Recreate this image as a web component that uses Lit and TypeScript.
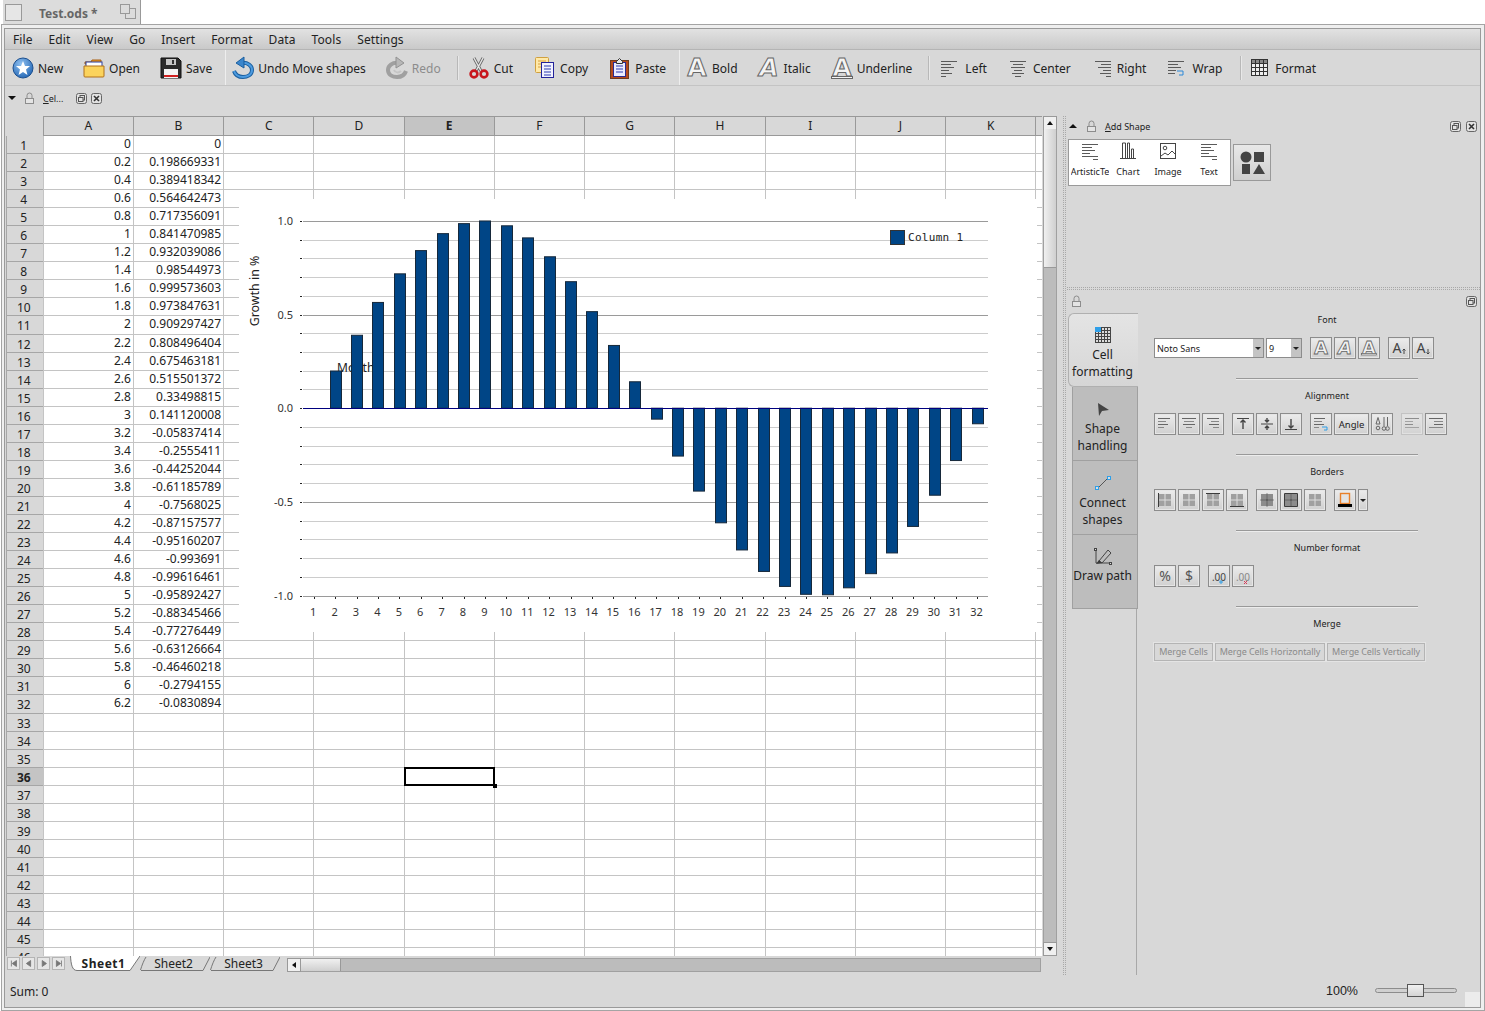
import { LitElement, html, css, svg } from "lit";
import { customElement } from "lit/decorators.js";

const B_VALUES = [
  "0", "0.198669331", "0.389418342", "0.564642473", "0.717356091", "0.841470985", "0.932039086", "0.98544973",
  "0.999573603", "0.973847631", "0.909297427", "0.808496404", "0.675463181", "0.515501372", "0.33498815",
  "0.141120008", "-0.05837414", "-0.2555411", "-0.44252044", "-0.61185789", "-0.7568025", "-0.87157577",
  "-0.95160207", "-0.993691", "-0.99616461", "-0.95892427", "-0.88345466", "-0.77276449", "-0.63126664",
  "-0.46460218", "-0.2794155", "-0.0830894",
];
const COLUMNS = ["A", "B", "C", "D", "E", "F", "G", "H", "I", "J", "K", ""];

const icon22 = (body: unknown) => html`<svg class="i22" viewBox="0 0 22 22" width="22" height="22">${body}</svg>`;
const icon18 = (body: unknown) => html`<svg class="i18" viewBox="0 0 18 18" width="18" height="18">${body}</svg>`;

const letterA = (style = "normal", extra: unknown = null) => svg`
  <text x="11" y="19" text-anchor="middle" font-family="DejaVu Sans" font-size="25" font-weight="bold" font-style=${style}
    fill="#f4f4f4" stroke="#666" stroke-width="1">A</text>${extra}`;

const lines = (rows: [number, number][]) =>
  rows.map(([x, w], i) => svg`<rect x=${x} y=${2 + i * 3} width=${w} height="1" fill="#5a5a5a"></rect>`);

const ICONS: Record<string, () => unknown> = {
  new: () => icon22(svg`
    <defs><radialGradient id="ng" cx="40%" cy="30%" r="80%"><stop offset="0" stop-color="#8fc0f0"></stop><stop offset="1" stop-color="#1a5fb0"></stop></radialGradient></defs>
    <circle cx="11" cy="11" r="10" fill="url(#ng)" stroke="#1b4f8f"></circle>
    <polygon points="11,4 13,9 18,9 14,12.5 15.5,18 11,15 6.5,18 8,12.5 4,9 9,9" fill="#fff"></polygon>`),
  open: () => icon22(svg`
    <path d="M2 5h6l1-2h9v4H2z" fill="#f09a20" stroke="#a85e10"></path>
    <rect x="3" y="5" width="16" height="5" fill="#fff" stroke="#2b3fa0"></rect>
    <path d="M1 9h20v10a1 1 0 0 1-1 1H2a1 1 0 0 1-1-1z" fill="#fbd35c" stroke="#b0701a"></path>`),
  save: () => icon22(svg`
    <path d="M1 1h17l3 3v17H1z" fill="#2c2c2c" stroke="#111"></path>
    <rect x="6" y="2" width="10" height="6" fill="#c8c8c8"></rect>
    <rect x="12" y="3" width="2" height="4" fill="#333"></rect>
    <rect x="4" y="12" width="14" height="9" fill="#f4f4f4"></rect>
    <rect x="4" y="18" width="14" height="2" fill="#d02020"></rect>`),
  undo: () => icon22(svg`
    <path d="M9 6C16 5 20 9 20 13C20 18 15 20 11 20C6 20 3 17 2 14" fill="none" stroke="#1b5f9f" stroke-width="4"></path>
    <path d="M9 6C16 5 20 9 20 13C20 18 15 20 11 20C6 20 3 17 2 14" fill="none" stroke="#4c9be0" stroke-width="2"></path>
    <polygon points="12,0 4,6 12,11" fill="#3b86cc" stroke="#1b5f9f"></polygon>`),
  redo: () => icon22(svg`
    <path d="M13 6C6 5 2 9 2 13C2 18 7 20 11 20C16 20 19 17 20 14" fill="none" stroke="#9a9a9a" stroke-width="4"></path>
    <path d="M8 13c1 3 5 3 7 1" fill="none" stroke="#c4c4c4" stroke-width="2"></path>
    <polygon points="10,0 18,6 10,11" fill="#b4b4b4" stroke="#8a8a8a"></polygon>`),
  cut: () => icon22(svg`
    <path d="M6 1l7 13M15 1L8 14" stroke="#666" stroke-width="3" fill="none"></path>
    <path d="M6 1l7 13M15 1L8 14" stroke="#e4e4e4" stroke-width="1.4" fill="none"></path>
    <circle cx="6" cy="17" r="3.4" fill="none" stroke="#c8161d" stroke-width="2.6"></circle>
    <circle cx="16" cy="17" r="3.4" fill="none" stroke="#c8161d" stroke-width="2.6"></circle>`),
  copy: () => icon22(svg`
    <rect x="1.5" y="0.5" width="13" height="15" rx="1" fill="#ffe9a8" stroke="#d0a040"></rect>
    <path d="M4 4h8M4 7h8M4 10h5" stroke="#d8a040"></path>
    <rect x="7.5" y="5.5" width="12" height="15" fill="#f2f2ff" stroke="#22229a"></rect>
    <path d="M10 9h7M10 12h7M10 15h7M10 18h7" stroke="#2a3ab0"></path>`),
  paste: () => icon22(svg`
    <rect x="1.5" y="3.5" width="18" height="18" fill="#b5491c" stroke="#6e3a20"></rect>
    <rect x="4.5" y="5.5" width="12" height="14" fill="#ececff" stroke="#2a2a90"></rect>
    <path d="M7.5 4.5l3-3 3 3v2h-6z" fill="#e8e8e8" stroke="#333"></path>
    <path d="M7 9h7M7 12h7M7 15h7" stroke="#2a3ab0"></path>`),
  bold: () => icon22(letterA()),
  italic: () => icon22(letterA("italic")),
  underline: () => icon22(letterA("normal", svg`<rect x="0.5" y="19.5" width="21" height="2" fill="#f4f4f4" stroke="#666"></rect>`)),
  left: () => icon18(lines([[0, 16], [0, 10], [0, 13], [0, 8], [0, 11], [0, 5]])),
  center: () => icon18(lines([[1, 16], [4, 10], [2, 14], [5, 8], [3, 12], [6, 6]])),
  right: () => icon18(lines([[2, 16], [8, 10], [5, 13], [10, 8], [7, 11], [13, 5]])),
  wrap: () => icon18(svg`${lines([[0, 16], [0, 10], [0, 13], [0, 8], [0, 7]])}
    <path d="M9 12h6v4h-4" fill="none" stroke="#2a88d8"></path>`),
  format: () => icon18(svg`
    <rect x="0.5" y="0.5" width="16" height="16" fill="#eee" stroke="#333"></rect>
    <rect x="0.5" y="0.5" width="16" height="4" fill="#888" stroke="#333"></rect>
    <path d="M4.5 1v15M8.5 1v15M12.5 1v15M1 8.5h15M1 12.5h15" stroke="#333"></path>`),
};

const lock = html`<svg class="lock" viewBox="0 0 11 13" width="11" height="13">
  <path d="M3 6V3.5a2.5 2.5 0 0 1 5 0V6" fill="none" stroke="#8c8c8c"></path>
  <rect x="1.5" y="6.5" width="8" height="5" fill="#e4e4e4" stroke="#8c8c8c"></rect>
</svg>`;
const floatIcon = html`<svg viewBox="0 0 11 11" width="11" height="11">
  <rect x="0.5" y="0.5" width="10" height="10" rx="2" fill="#e2e2e2" stroke="#666"></rect>
  <rect x="4" y="2.5" width="4.5" height="4.5" fill="none" stroke="#555"></rect>
  <rect x="2.5" y="4.5" width="4.5" height="4" fill="#e2e2e2" stroke="#555"></rect>
</svg>`;
const closeIcon = html`<svg viewBox="0 0 11 11" width="11" height="11">
  <rect x="0.5" y="0.5" width="10" height="10" rx="2" fill="#e2e2e2" stroke="#666"></rect>
  <path d="M3 3l5 5M8 3l-5 5" stroke="#333" stroke-width="1.6"></path>
</svg>`;

// small 16px glyphs for the cell formatting buttons
const mini = (body: unknown) => html`<svg class="mini" viewBox="0 0 16 16" width="16" height="16">${body}</svg>`;
const hLines = (rows: [number, number][]) =>
  rows.map(([x, w], i) => svg`<rect x=${x} y=${2 + i * 3} width=${w} height="1" fill=${i % 2 ? "#888" : "#666"}></rect>`);
const vAlign = (lineY: number, body: string) => mini(svg`
  <rect x="2" y=${lineY} width="12" height="1" fill="#444"></rect>
  <path d=${body} fill="none" stroke="#444" stroke-width="1.4"></path>`);
const aText = (label: string, size: number, fill = "#444") =>
  svg`<text x="8" y="12.5" text-anchor="middle" font-family="Noto Sans" font-size=${size} fill=${fill}>${label}</text>`;
const borderCells = (edges = "", dark = false) => {
  const c = dark ? "#8c8c8c" : "#a0a0a0";
  return mini(svg`
    <rect x="2" y="2" width="5.5" height="5.5" fill=${c}></rect>
    <rect x="8.5" y="2" width="5.5" height="5.5" fill=${c}></rect>
    <rect x="2" y="8.5" width="5.5" height="5.5" fill=${c}></rect>
    <rect x="8.5" y="8.5" width="5.5" height="5.5" fill=${c}></rect>
    <path d=${edges} stroke="#3c3c3c" fill="none"></path>`);
};
const smallA = (style = "normal", extra: unknown = null) => mini(svg`
  <text x="8" y="13.5" text-anchor="middle" font-family="DejaVu Sans" font-size="18" font-weight="bold" font-style=${style}
    fill="#f2f2f2" stroke="#666" stroke-width="0.8">A</text>${extra}`);

const TABS = [
  {
    label: ["Cell", "formatting"],
    icon: html`<svg viewBox="0 0 16 16" width="16" height="16">
      <rect x="0.5" y="0.5" width="15" height="15" fill="#ddd" stroke="#444"></rect>
      <path d="M3.5 1v14M6.5 1v14M9.5 1v14M12.5 1v14M1 3.5h14M1 6.5h14M1 9.5h14M1 12.5h14" stroke="#444"></path>
      <rect x="0" y="0" width="6" height="5" fill="#2f9fe8"></rect></svg>`,
  },
  {
    label: ["Shape", "handling"],
    icon: html`<svg viewBox="0 0 16 16" width="16" height="16">
      <polygon points="3,2 14,9 7,10 4,15" fill="#444"></polygon></svg>`,
  },
  {
    label: ["Connect", "shapes"],
    icon: html`<svg viewBox="0 0 16 16" width="16" height="16">
      <path d="M3 13L13 3" stroke="#555"></path>
      <rect x="0.5" y="11.5" width="3" height="3" fill="#ddd" stroke="#2f9fe8"></rect>
      <rect x="12.5" y="1.5" width="3" height="3" fill="#ddd" stroke="#2f9fe8"></rect></svg>`,
  },
  {
    label: ["Draw path"],
    icon: html`<svg viewBox="0 0 18 18" width="18" height="18">
      <path d="M5 13L14 2l3 3-9 10z" fill="none" stroke="#444"></path>
      <path d="M2 16l3-4 3 3z" fill="#333"></path>
      <rect x="0.5" y="0.5" width="2" height="2" fill="#ddd" stroke="#444"></rect>
      <rect x="15.5" y="14.5" width="2" height="2" fill="#ddd" stroke="#444"></rect>
      <path d="M2 3v12h13" fill="none" stroke="#444"></path></svg>`,
  },
];

@customElement("sheet-chart")
export class SheetChart extends LitElement {
  static styles = css`
    :host {
      position: absolute;
      left: 234px;
      top: 83px;
      width: 798px;
      height: 433px;
      z-index: 2;
      background: #fff;
    }
    svg {
      display: block;
    }
    text {
      font-family: "Noto Sans", sans-serif;
      fill: #333;
    }
    .axis {
      font-size: 11px;
    }
    .title {
      font-size: 12px;
      fill: #222;
    }
    .growth {
      font-size: 12.4px;
      fill: #222;
    }
    .legend {
      font-family: "DejaVu Sans Mono", monospace;
      font-size: 11px;
      fill: #222;
      letter-spacing: 0.3px;
    }
  `;

  render() {
    const yOf = (v: number) => 408.2 - v * 187.3;
    const xOf = (i: number) => 303 + (i + 0.5) * 21.4;
    const grid = Array.from({ length: 21 }, (_, i) => (10 - i) / 10);
    return html`<svg viewBox="239 199 798 433" width="798" height="433">
      ${grid.map((v) => {
        const major = Math.abs(v * 2 - Math.round(v * 2)) < 0.001;
        const y = Math.round(yOf(v)) + 0.5;
        return svg`
          <line x1="303" x2="988" y1=${y} y2=${y} stroke=${major ? "#9a9a9a" : "#cccccc"}></line>
          <line x1="300" x2="302" y1=${y} y2=${y} stroke="#222"></line>`;
      })}
      ${[1, 0.5, 0, -0.5, -1].map(
        (v) => svg`<text class="axis" x="293" y=${yOf(v) + 4} text-anchor="end">${v.toFixed(1)}</text>`
      )}
      <text class="title" x="337" y="372">Month</text>
      <text class="growth" transform="translate(259 291) rotate(-90)" text-anchor="middle">Growth in %</text>
      ${B_VALUES.map((raw, i) => {
        const v = Number(raw);
        const x = Math.round(xOf(i) - 5.5) + 0.5;
        const y0 = yOf(Math.max(v, 0));
        const h = Math.abs(v) * 187.3;
        return v === 0
          ? null
          : svg`<rect x=${x} y=${y0} width="11" height=${h} fill="#004586" stroke="#16283a"></rect>`;
      })}
      <line x1="303" x2="988" y1="408.5" y2="408.5" stroke="#00007f"></line>
      ${B_VALUES.map((_, i) => {
        const x = Math.round(xOf(i)) + 0.5;
        return svg`
          <line x1=${x} x2=${x} y1="597" y2="599" stroke="#222"></line>
          <text class="axis" x=${xOf(i) - 0.5} y="616" text-anchor="middle">${i + 1}</text>`;
      })}
      <rect x="890.5" y="230.5" width="14" height="14" fill="#004586" stroke="#333"></rect>
      <text class="legend" x="908" y="241">Column 1</text>
    </svg>`;
  }
}

@customElement("app-root")
export class AppRoot extends LitElement {
  static styles = css`
    :host {
      display: block;
      position: relative;
      width: 1485px;
      height: 1011px;
      overflow: hidden;
      background: #fff;
      font-family: "Noto Sans", sans-serif;
      font-size: 12px;
      color: #222;
    }
    svg {
      display: block;
      flex: none;
    }
    .i22,
    .mini {
      overflow: visible;
    }

    .tabstrip {
      height: 24px;
      padding-left: 3px;
      display: flex;
    }
    .doc-tab {
      width: 138px;
      box-sizing: border-box;
      background: #dcdcdc;
      border-right: 1px solid #999;
      display: flex;
      align-items: center;
      padding: 0 4px 0 2px;
      font-weight: bold;
      font-size: 12px;
      color: #666;
    }
    .doc-box {
      width: 15px;
      height: 15px;
      border: 1px solid #999;
      background: #e6e6e6;
      margin-right: 17px;
    }
    .doc-title {
      flex: 1;
      padding-top: 2px;
    }
    .frame {
      height: 987px;
      box-sizing: border-box;
      margin-left: 1px;
      border: 1px solid #a4a4a4;
      background: #efefef;
      padding: 3px 3px 2px 2px;
    }
    .win {
      height: 980px;
      box-sizing: border-box;
      border: 1px solid #9a9a9a;
      background: #d8d8d8;
      display: flex;
      flex-direction: column;
    }

    .menubar {
      height: 21px;
      box-sizing: border-box;
      display: flex;
      align-items: center;
      background: linear-gradient(#e2e2e2, #c9c9c9);
      border-bottom: 1px solid #b4b4b4;
      letter-spacing: 0.1px;
    }
    .menubar span {
      padding: 0 8px;
    }

    .toolbar {
      height: 36px;
      box-sizing: border-box;
      display: flex;
      align-items: center;
      padding-left: 7px;
      border-bottom: 1px solid #c4c4c4;
      white-space: nowrap;
    }
    .tool {
      display: flex;
      align-items: center;
      gap: 4px;
      margin-right: 20px;
    }
    .tool span {
      padding-top: 2px;
    }
    .tool.wide {
      margin-right: 21px;
    }
    .tool.align {
      gap: 6px;
      margin-right: 22px;
    }
    .tool.off {
      color: #8c8c8c;
    }
    .tool.off svg {
      opacity: 0.9;
    }
    .sep-tall {
      align-self: stretch;
      width: 1px;
      background: #eeeeee;
      margin: 0 6px 0 -7px;
    }
    .sep-short {
      width: 1px;
      height: 24px;
      background: #b8b8b8;
      margin: 0 12px 0 -4px;
      box-shadow: 1px 0 0 #e8e8e8;
    }
    .sep-short.tight {
      margin-right: 10px;
    }

    .dockbar {
      height: 24px;
      display: flex;
      align-items: center;
      font-size: 9px;
    }
    .tri-down {
      width: 0;
      height: 0;
      border: 4px solid transparent;
      border-top: 4px solid #111;
      border-bottom: 0;
      margin: 0 8px 0 3px;
    }
    .tri-up {
      width: 0;
      height: 0;
      border: 4px solid transparent;
      border-bottom: 4px solid #111;
      border-top: 0;
      margin: 0 9px 0 2px;
    }
    .dockbar .lock {
      margin: 0 8px 0 0;
    }
    .dockbar .name {
      width: 33px;
    }
    .dockbar .close {
      margin-left: 4px;
    }
    .ul {
      text-decoration: underline;
    }

    .main {
      height: 865px;
      box-sizing: border-box;
      padding-top: 6px;
      display: flex;
    }
    .sheetcol {
      width: 1052px;
      flex: none;
    }
    .sheetrow {
      height: 840px;
      display: flex;
    }
    .gridclip {
      width: 1037px;
      position: relative;
      overflow: hidden;
      background: #d8d8d8;
    }
    .grid {
      display: grid;
      grid-template-columns: 37.6px repeat(11, 90.25px) 20px;
      grid-template-rows: 20px;
      grid-auto-rows: 18.05px;
    }
    .corner {
      background: #d8d8d8;
    }
    .colh {
      box-sizing: border-box;
      border: solid #999;
      border-width: 1px 0 1px 1px;
      background: #d8d8d8;
      text-align: center;
      line-height: 18px;
    }
    .colh.active,
    .rowh.active {
      background: #c4c4c4;
      font-weight: bold;
    }
    .rowh {
      box-sizing: border-box;
      margin-left: 1px;
      padding-right: 2px;
      border: solid #a6a6a6;
      border-width: 0 0 1px 1px;
      background: #d8d8d8;
      text-align: center;
      line-height: 20px;
    }
    .cell {
      box-sizing: border-box;
      background: #fff;
      border: solid #c4c4c4;
      border-width: 0 0 1px 1px;
      text-align: right;
      padding-right: 2px;
      line-height: 16px;
      white-space: nowrap;
      overflow: hidden;
    }
    .selected {
      position: relative;
      overflow: visible;
      z-index: 1;
    }
    .selected::after {
      content: "";
      position: absolute;
      inset: -1px -1px -1px -1px;
      border: 2px solid #000;
    }
    .selected::before {
      content: "";
      position: absolute;
      right: -3px;
      bottom: -3px;
      width: 4px;
      height: 4px;
      background: #000;
      z-index: 1;
    }

    .vscroll {
      width: 14px;
      margin-left: 1px;
      display: flex;
      flex-direction: column;
      background: #bcbcbc;
      box-sizing: border-box;
      border: 1px solid #a0a0a0;
    }
    .sbtn {
      flex: none;
      display: flex;
      align-items: center;
      justify-content: center;
      background: #f0f0f0;
      border: 1px solid #999;
      box-sizing: border-box;
    }
    .vscroll .sbtn {
      height: 14px;
      margin: -1px;
    }
    .vthumb {
      height: 138px;
      flex: none;
      background: linear-gradient(90deg, #f0f0f0, #cfcfcf);
      border-bottom: 1px solid #999;
    }
    .spacer {
      flex: 1;
    }

    .sheetfoot {
      height: 19px;
      display: flex;
      padding-left: 2px;
    }
    .nav {
      display: flex;
      gap: 2px;
      width: 58px;
      padding-top: 1px;
    }
    .nav svg {
      border: 1px solid #b4b4b4;
      background: #e6e6e6;
      box-sizing: border-box;
    }
    .sheettabs {
      display: flex;
      margin-left: 5px;
    }
    .sheettab {
      position: relative;
      width: 70px;
      height: 16px;
      box-sizing: border-box;
      padding-right: 3px;
      text-align: center;
      line-height: 15px;
    }
    .sheettab svg {
      position: absolute;
      inset: 0;
    }
    .sheettab span {
      position: relative;
    }
    .sheettab.on {
      font-weight: bold;
      letter-spacing: 0.5px;
    }
    .hscroll {
      margin: 2px 0 0 7px;
      width: 754px;
      height: 14px;
      box-sizing: border-box;
      display: flex;
      background: #bcbcbc;
      border: 1px solid #a0a0a0;
    }
    .hscroll .sbtn {
      width: 14px;
      margin: -1px 0 -1px -1px;
    }
    .hthumb {
      width: 39px;
      background: linear-gradient(#f0f0f0, #cfcfcf);
      border-right: 1px solid #999;
    }

    .vsplit {
      width: 3px;
      margin: 0 1px 0 6px;
      flex: none;
      border-left: 1px dotted #a8a8a8;
      border-right: 1px dotted #a8a8a8;
      box-sizing: border-box;
    }

    .panel {
      flex: 1;
      display: flex;
      flex-direction: column;
      min-width: 0;
    }
    .dock-top {
      height: 171px;
      flex: none;
    }
    .dock-head {
      height: 22px;
      display: flex;
      align-items: center;
      font-size: 9px;
      padding: 0 3px 2px 0;
      box-sizing: border-box;
    }
    .dock-head .name {
      flex: 1;
      padding-top: 1px;
    }
    .dock-head .lock {
      margin-right: 8px;
    }
    .dock-head .close {
      margin-left: 5px;
    }
    .shape-row {
      margin: 1px 0 0 1px;
      display: flex;
      align-items: flex-start;
      gap: 2px;
    }
    .shape-box {
      width: 163px;
      height: 47px;
      box-sizing: border-box;
      border: 1px solid #9a9a9a;
      background: #fff;
      padding-left: 2px;
      display: grid;
      grid-template-columns: 38px 38px 42px 40px;
      overflow: hidden;
    }
    .shape-item {
      display: flex;
      flex-direction: column;
      align-items: center;
      font-size: 9px;
      padding-top: 2px;
      overflow: hidden;
      white-space: nowrap;
    }
    .shape-item svg {
      margin-bottom: 5px;
    }
    .shape-btn {
      position: relative;
      width: 38px;
      height: 37px;
      box-sizing: border-box;
      margin-top: 5px;
      border: 1px solid #999;
      background: linear-gradient(#e8e8e8, #cfcfcf);
      display: flex;
      align-items: center;
      justify-content: center;
    }
    .hsplit {
      height: 3px;
      border-top: 1px dotted #a8a8a8;
      border-bottom: 1px dotted #a8a8a8;
      box-sizing: border-box;
      flex: none;
    }
    .dock-bottom-head {
      height: 23px;
      display: flex;
      align-items: center;
      justify-content: space-between;
      padding: 0 3px 0 4px;
      box-sizing: border-box;
    }
    .dock-body {
      flex: 1;
      display: flex;
    }
    .tabs {
      width: 71px;
      flex: none;
      display: flex;
      flex-direction: column;
    }
    .vtab {
      height: 74px;
      box-sizing: border-box;
      margin-left: 5px;
      padding-right: 5px;
      background: #bdbdbd;
      border: 1px solid #a0a0a0;
      border-top-width: 0;
      display: flex;
      flex-direction: column;
      align-items: center;
      padding-top: 14px;
      font-size: 12px;
      line-height: 17px;
      white-space: nowrap;
    }
    .vtab svg {
      margin-bottom: 3px;
    }
    .vtab.on {
      margin-left: 1px;
      padding-right: 2px;
      padding-top: 13px;
      background: linear-gradient(#e4e4e4, #d6d6d6);
      border: solid #b0b0b0;
      border-width: 1px 0 1px 1px;
      border-radius: 6px 0 0 6px;
    }
    .vtab:nth-child(4) {
      padding-top: 13px;
    }
    .vtab:nth-child(4) svg {
      margin-bottom: 1px;
    }
    .tabfill {
      flex: 1;
      margin-right: 1px;
      border-right: 1px solid #a8a8a8;
    }

    .fmt {
      flex: 1;
      padding-left: 16px;
      min-width: 0;
    }
    .group {
      height: 76px;
      font-size: 9px;
    }
    .group-label {
      margin-left: 82px;
      width: 182px;
      height: 14px;
      line-height: 14px;
      text-align: center;
      margin-bottom: 9px;
    }
    .group-row {
      height: 24px;
      display: flex;
      align-items: center;
      white-space: nowrap;
    }
    .group-rule {
      margin: 18px 0 0 82px;
      width: 182px;
      height: 2px;
      box-sizing: border-box;
      border-top: 1px solid #999;
      border-bottom: 1px solid #ececec;
    }
    .bset {
      display: flex;
      gap: 2px;
      margin-right: 8px;
    }
    .btn {
      width: 22px;
      height: 22px;
      box-sizing: border-box;
      border: 1px solid #8c8c8c;
      box-shadow: 0 0 0 1px #e6e6e6 inset;
      background: linear-gradient(#ececec, #d0d0d0);
      display: flex;
      align-items: center;
      justify-content: center;
    }
    .btn.off {
      border-color: #b8b8b8;
      opacity: 0.65;
    }
    .btn.angle {
      width: 35px;
      font-size: 9.5px;
    }
    .btn.arrow {
      width: 10px;
    }
    .combo {
      height: 20px;
      box-sizing: border-box;
      border: 1px solid #8c8c8c;
      background: #fff;
      display: flex;
      align-items: center;
      padding-left: 2px;
      font-size: 9px;
    }
    .combo.name {
      width: 110px;
      margin-right: 2px;
    }
    .combo.size {
      width: 36px;
      margin-right: 8px;
    }
    .combo span {
      flex: 1;
    }
    .combo i {
      width: 10px;
      height: 18px;
      background: #c4c4c4;
      display: flex;
      align-items: center;
      justify-content: center;
    }
    .caret {
      width: 0;
      height: 0;
      border: 3px solid transparent;
      border-top: 3px solid #222;
      border-bottom: 0;
    }
    .merge {
      height: 18px;
      box-sizing: border-box;
      border: 1px solid #b4b4b4;
      box-shadow: 0 0 0 1px #e4e4e4;
      color: #8a8a8a;
      font-size: 9px;
      line-height: 16px;
      text-align: center;
      margin-right: 2px;
      letter-spacing: -0.1px;
    }

    .status {
      height: 32px;
      display: flex;
      align-items: center;
      padding: 0 23px 0 5px;
    }
    .status .pct {
      margin-left: auto;
      margin-right: 17px;
      font-family: "Liberation Sans", sans-serif;
      font-size: 12.5px;
    }
    .slider {
      position: relative;
      width: 82px;
      height: 5px;
      margin-top: -2px;
      box-sizing: border-box;
      border: 1px solid #8c8c8c;
      border-radius: 3px;
      background: #d0d0d0;
    }
    .knob {
      position: absolute;
      left: 31px;
      top: -5px;
      width: 17px;
      height: 13px;
      box-sizing: border-box;
      border: 1px solid #555;
      background: linear-gradient(#f0f0f0, #d4d4d4);
    }
    .grip {
      position: absolute;
      right: 5px;
      bottom: 4px;
      width: 15px;
      height: 15px;
      background: #ececec;
    }
  `;

  private renderGrid() {
    const rows = Array.from({ length: 46 }, (_, i) => i);
    return html`<div class="grid">
      <div class="corner"></div>
      ${COLUMNS.map((c) => html`<div class="colh ${c === "E" ? "active" : ""}">${c}</div>`)}
      ${rows.map(
        (r) => html`
          <div class="rowh ${r === 35 ? "active" : ""}">${r + 1}</div>
          ${COLUMNS.map((c) => {
            let text = "";
            if (r < 32 && c === "A") text = String(Math.round(r * 2) / 10);
            if (r < 32 && c === "B") text = B_VALUES[r];
            return html`<div class="cell ${r === 35 && c === "E" ? "selected" : ""}">${text}</div>`;
          })}
        `
      )}
    </div>`;
  }

  private renderToolbar() {
    const tool = (key: string, label: string, cls = "") =>
      html`<div class="tool ${cls}">${ICONS[key]()}<span>${label}</span></div>`;
    return html`<div class="toolbar">
      ${tool("new", "New")} ${tool("open", "Open")} ${tool("save", "Save")}
      <div class="sep-tall"></div>
      ${tool("undo", "Undo Move shapes")} ${tool("redo", "Redo", "off")}
      <div class="sep-short tight"></div>
      ${tool("cut", "Cut", "wide")} ${tool("copy", "Copy", "wide")} ${tool("paste", "Paste")}
      <div class="sep-tall"></div>
      ${tool("bold", "Bold")} ${tool("italic", "Italic")} ${tool("underline", "Underline")}
      <div class="sep-short"></div>
      ${tool("left", "Left", "align")} ${tool("center", "Center", "align")} ${tool("right", "Right", "align")}
      ${tool("wrap", "Wrap", "align")}
      <div class="sep-short tight"></div>
      ${tool("format", "Format", "align")}
    </div>`;
  }

  private renderFooter() {
    const nav = ["M4 3v7M10 3L5 6.5 10 10z", "M9 3L4 6.5 9 10z", "M5 3l5 3.5L5 10z", "M10 3v7M4 3l5 3.5L4 10z"];
    const tabOn = "M0.5 0C1 8 2 14.5 7 14.5H60L70 0";
    const tabOff = "M0.5 14C2 9 4 4 6 1M1 14.5H63L70 1";
    return html`<div class="sheetfoot">
      <div class="nav">
        ${nav.map(
          (d) => html`<svg viewBox="0 0 13 13" width="13" height="13"><path d=${d} fill="#777" stroke="#777"></path></svg>`
        )}
      </div>
      <div class="sheettabs">
        ${["Sheet1", "Sheet2", "Sheet3"].map(
          (name, i) => html`<div class="sheettab ${i === 0 ? "on" : ""}">
            <svg viewBox="0 0 70 16" width="70" height="16">
              <path d=${i === 0 ? tabOn : tabOff} fill=${i === 0 ? "#fff" : "none"} stroke="#777"></path>
            </svg>
            <span>${name}</span>
          </div>`
        )}
      </div>
      <div class="hscroll">
        <div class="sbtn">
          <svg viewBox="0 0 8 8" width="8" height="8"><polygon points="6,1 2,4 6,7" fill="#111"></polygon></svg>
        </div>
        <div class="hthumb"></div>
      </div>
    </div>`;
  }

  private renderFormatPanel() {
    const l = (rows: [number, number][]) => mini(hLines(rows));
    const btn = (g: unknown, off = false) => html`<div class="btn ${off ? "off" : ""}">${g}</div>`;
    return html`<div class="fmt">
      <div class="group">
        <div class="group-label">Font</div>
        <div class="group-row">
          <div class="combo name"><span>Noto Sans</span><i><b class="caret"></b></i></div>
          <div class="combo size"><span>9</span><i><b class="caret"></b></i></div>
          <div class="bset">
            ${btn(smallA())} ${btn(smallA("italic"))}
            ${btn(smallA("normal", svg`<rect x="0.5" y="13.5" width="15" height="1.5" fill="#eee" stroke="#666" stroke-width="0.7"></rect>`))}
          </div>
          <div class="bset">
            ${btn(mini(svg`<text x="6" y="12.5" text-anchor="middle" font-family="Noto Sans" font-size="14" fill="#444">A</text><path d="M13 14V9M11.5 10.5L13 9l1.5 1.5" stroke="#444" fill="none"></path>`))}
            ${btn(mini(svg`<text x="6" y="12.5" text-anchor="middle" font-family="Noto Sans" font-size="14" fill="#444">A</text><path d="M13 9v5M11.5 12.5L13 14l1.5-1.5" stroke="#444" fill="none"></path>`))}
          </div>
        </div>
        <div class="group-rule"></div>
      </div>

      <div class="group">
        <div class="group-label">Alignment</div>
        <div class="group-row">
          <div class="bset">
            ${btn(l([[1, 12], [1, 8], [1, 10], [1, 6]]))} ${btn(l([[1, 14], [3, 10], [2, 12], [5, 6]]))}
            ${btn(l([[2, 12], [6, 8], [4, 10], [8, 6]]))}
          </div>
          <div class="bset">
            ${btn(vAlign(2, "M8 13V4M5.5 6.5L8 4l2.5 2.5"))} ${btn(vAlign(7.5, "M8 2v4M8 14v-4M6 4l2 2 2-2M6 12l2-2 2 2"))}
            ${btn(vAlign(13, "M8 3v9M5.5 9.5L8 12l2.5-2.5"))}
          </div>
          <div class="bset">
            ${btn(mini(svg`${hLines([[1, 11], [1, 8], [1, 10], [1, 5]])}<path d="M9 11h5v3h-3" stroke="#2f9fe8" fill="none"></path>`))}
            <div class="btn angle">Angle</div>
            ${btn(mini(svg`<path d="M4 1.5L2 8h4zM10 1v9M13.5 1v9" fill="none" stroke="#666"></path><circle cx="4" cy="12" r="1.8" fill="none" stroke="#666"></circle><circle cx="10" cy="12.5" r="1.8" fill="none" stroke="#666"></circle><circle cx="13.5" cy="12.5" r="1.8" fill="none" stroke="#666"></circle>`))}
          </div>
          <div class="bset">
            ${btn(l([[1, 14], [1, 8], [1, 8], [1, 14]]), true)} ${btn(l([[1, 14], [6, 9], [6, 9], [1, 14]]))}
          </div>
        </div>
        <div class="group-rule"></div>
      </div>

      <div class="group">
        <div class="group-label">Borders</div>
        <div class="group-row">
          <div class="bset">
            ${btn(borderCells("M1.5 1v14"))} ${btn(borderCells())} ${btn(borderCells("M1 1.5h14"))}
            ${btn(borderCells("M1 14.5h14"))}
          </div>
          <div class="bset">
            ${btn(borderCells("M8 1.5v13M1.5 8h13", true))} ${btn(borderCells("M1.5 1.5h13v13h-13zM8 1.5v13M1.5 8h13", true))}
            ${btn(borderCells())}
          </div>
          <div class="bset">
            ${btn(mini(svg`<rect x="3.5" y="1.5" width="9" height="10" fill="#e4e4e4" stroke="#e8802a" stroke-width="1.4"></rect><rect x="1" y="12" width="14" height="3" fill="#000"></rect>`))}
            <div class="btn arrow"><b class="caret"></b></div>
          </div>
        </div>
        <div class="group-rule"></div>
      </div>

      <div class="group">
        <div class="group-label">Number format</div>
        <div class="group-row">
          <div class="bset">${btn(mini(aText("%", 14, "#555")))} ${btn(mini(aText("$", 14, "#555")))}</div>
          <div class="bset">
            ${btn(mini(svg`${aText(".00", 10)}<path d="M10 12v4M8 14h4" stroke="#2f9fe8"></path>`))}
            ${btn(mini(svg`${aText(".00", 10, "#888")}<path d="M9 13l3 3M12 13l-3 3" stroke="#d83a5a"></path>`))}
          </div>
        </div>
        <div class="group-rule"></div>
      </div>

      <div class="group">
        <div class="group-label">Merge</div>
        <div class="group-row">
          <div class="merge" style="width:59px">Merge Cells</div>
          <div class="merge" style="width:110px">Merge Cells Horizontally</div>
          <div class="merge" style="width:98px">Merge Cells Vertically</div>
        </div>
      </div>
    </div>`;
  }

  private renderPanel() {
    const textIcon = html`<svg viewBox="0 0 18 18" width="18" height="18">${lines([[1, 16], [1, 10], [1, 13], [1, 8], [1, 16], [12, 5]])}</svg>`;
    return html`<div class="panel">
      <div class="dock-top">
        <div class="dock-head">
          <div class="tri-up"></div>
          ${lock}
          <span class="name"><span class="ul">A</span>dd Shape</span>
          ${floatIcon}
          <span class="close">${closeIcon}</span>
        </div>
        <div class="shape-row">
          <div class="shape-box">
            <div class="shape-item">${textIcon}ArtisticTe</div>
            <div class="shape-item">
              <svg viewBox="0 0 18 18" width="18" height="18">
                <path d="M1 16.5h16M3.5 16V1h3v15M8.5 16V1h2v15M12.5 16V7h2v9" fill="none" stroke="#444"></path>
              </svg>
              Chart
            </div>
            <div class="shape-item">
              <svg viewBox="0 0 18 18" width="18" height="18">
                <rect x="1.5" y="1.5" width="15" height="15" fill="#fff" stroke="#444"></rect>
                <circle cx="6" cy="6" r="1.8" fill="none" stroke="#444"></circle>
                <path d="M2 14l4-3 3 2 4-4 3 3" fill="none" stroke="#444"></path>
              </svg>
              Image
            </div>
            <div class="shape-item">${textIcon}Text</div>
          </div>
          <div class="shape-btn">
            <svg viewBox="0 0 26 26" width="26" height="26">
              <circle cx="7" cy="7" r="5.5" fill="#444"></circle>
              <rect x="15" y="2" width="10" height="10" fill="#444"></rect>
              <rect x="3" y="14" width="8" height="10" fill="#444"></rect>
              <polygon points="20,14 26,24 14,24" fill="#444"></polygon>
            </svg>
          </div>
        </div>
      </div>
      <div class="hsplit"></div>
      <div class="dock-bottom-head">${lock}${floatIcon}</div>
      <div class="dock-body">
        <div class="tabs">
          ${TABS.map(
            (t, i) => html`<div class="vtab ${i === 0 ? "on" : ""}">
              ${t.icon} ${t.label.map((s) => html`<div>${s}</div>`)}
            </div>`
          )}
          <div class="tabfill"></div>
        </div>
        ${this.renderFormatPanel()}
      </div>
    </div>`;
  }

  render() {
    const menus = ["File", "Edit", "View", "Go", "Insert", "Format", "Data", "Tools", "Settings"];
    return html`
      <div class="tabstrip">
        <div class="doc-tab">
          <div class="doc-box"></div>
          <span class="doc-title">Test.ods *</span>
          <svg viewBox="0 0 16 16" width="16" height="16">
            <rect x="5.5" y="4.5" width="10" height="10" fill="none" stroke="#999"></rect>
            <rect x="0.5" y="0.5" width="9" height="9" fill="#dcdcdc" stroke="#999"></rect>
          </svg>
        </div>
      </div>
      <div class="frame">
        <div class="win">
          <div class="menubar">${menus.map((m) => html`<span>${m}</span>`)}</div>
          ${this.renderToolbar()}
          <div class="dockbar">
            <div class="tri-down"></div>
            ${lock}
            <span class="name"><span class="ul">C</span>el...</span>
            ${floatIcon}
            <span class="close">${closeIcon}</span>
          </div>
          <div class="main">
            <div class="sheetcol">
              <div class="sheetrow">
                <div class="gridclip">
                  ${this.renderGrid()}
                  <sheet-chart></sheet-chart>
                </div>
                <div class="vscroll">
                  <div class="sbtn">
                    <svg viewBox="0 0 8 8" width="8" height="8"><polygon points="1,6 4,2 7,6" fill="#111"></polygon></svg>
                  </div>
                  <div class="vthumb"></div>
                  <div class="spacer"></div>
                  <div class="sbtn">
                    <svg viewBox="0 0 8 8" width="8" height="8"><polygon points="1,2 4,6 7,2" fill="#111"></polygon></svg>
                  </div>
                </div>
              </div>
              ${this.renderFooter()}
            </div>
            <div class="vsplit"></div>
            ${this.renderPanel()}
          </div>
          <div class="status">
            <span>Sum: 0</span>
            <span class="pct">100%</span>
            <div class="slider"><div class="knob"></div></div>
          </div>
        </div>
      </div>
      <div class="grip"></div>
    `;
  }
}
